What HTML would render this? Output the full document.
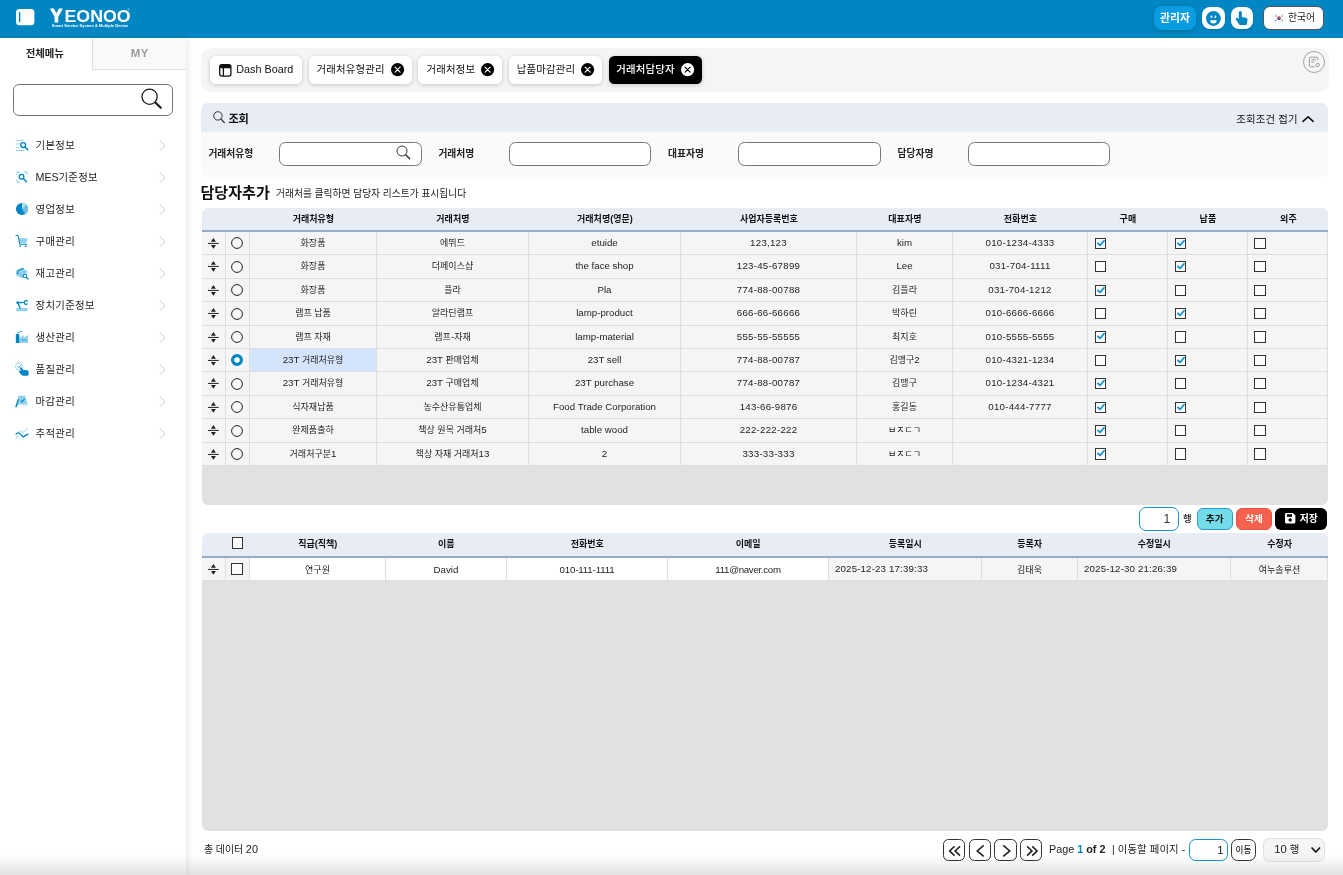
<!DOCTYPE html>
<html lang="ko">
<head>
<meta charset="utf-8">
<title>거래처담당자</title>
<style>
*{box-sizing:border-box;margin:0;padding:0}
html,body{width:1343px;height:875px;overflow:hidden;background:#fff}
body{filter:brightness(1);font-family:"Liberation Sans","Noto Sans CJK KR",sans-serif;font-size:10.4px;color:#222;position:relative}
.abs{position:absolute}
svg{display:block;overflow:visible}
#hdr{left:0;top:0;width:1343px;height:37.5px;background:#0087c3}
#side{left:0;top:37.5px;width:186.4px;height:838px;background:#fff;box-shadow:2px 0 7px rgba(0,0,0,.085)}
#side .t1{position:absolute;left:0;top:0;width:89.6px;height:32px;text-align:center;line-height:31px;font-weight:700;font-size:10.4px;color:#222}
#side .t2{position:absolute;left:92px;top:0;width:94.4px;height:32px;background:#f9f9f9;border-left:1px solid #dedede;border-bottom:1px solid #dedede;text-align:center;line-height:30px;font-weight:700;font-size:11.4px;letter-spacing:.5px;color:#9b9b9b}
#sbox{left:13px;top:46.8px;width:160px;height:31.4px;border:1px solid #777;border-radius:6px;background:#fff}
.mi{position:absolute;left:0;width:186px;height:32px}
.mi .tx{position:absolute;left:35.6px;top:0;line-height:34.4px;letter-spacing:.3px;font-size:10.4px;color:#222;white-space:nowrap}
.mi svg.ic{position:absolute;left:15.4px;top:8.5px;width:14px;height:14px}
.mi em{font-size:1.03em;letter-spacing:-.1px}
.mi svg.ch{position:absolute;left:159px;top:10.5px;width:7px;height:11px}
#tabbar{left:201.4px;top:48px;width:1127.4px;height:43.7px;background:#f5f5f5;border-radius:10px}
.tab{position:absolute;top:55.6px;height:28.6px;background:#fff;border-radius:5.5px;box-shadow:0 1px 4px rgba(0,0,0,.2);font-size:10.4px;line-height:28.4px;white-space:nowrap;color:#111}
.tab.on{background:#000;color:#fff;font-weight:500}
.tab .tt{position:absolute;top:0}
.tab svg{position:absolute}
#sp{left:201.4px;top:102.6px;width:1126.8px;height:74.6px;border-radius:7px;background:#fafafa;overflow:hidden}
#sp .h{position:absolute;left:0;top:0;width:100%;height:29px;background:#e7ecf5}
.lbl{position:absolute;font-size:9.75px;font-weight:700;color:#222;line-height:14px;white-space:nowrap}
.inp{position:absolute;top:142px;width:142px;height:24px;border:1px solid #777;border-radius:6.5px;background:#fff}
.grid{position:absolute;left:202px;width:1126px;background:#e1e1e1;border-radius:7px 7px 6px 6px;overflow:hidden;font-size:9px;color:#1d1d1d}
.gh{position:absolute;left:0;top:0;width:100%;background:#e7ecf5;border-bottom:2px solid #97acca;font-weight:700;color:#111}
.gh span,.gr span{position:absolute;top:0;text-align:center;white-space:nowrap;overflow:hidden;display:block}
.gr{position:absolute;left:0;width:100%;background:#f5f5f5;border-bottom:1px solid #dedede;border-right:1px solid #dedede}
.gr span{border-left:1px solid #dedede;height:100%}
.gr span:first-child{border-left:0}
.gr span.w{background:#fff}
.gr span.sel{background:#d5e4fd}
.gr span.l{text-align:left;padding-left:6px;letter-spacing:.16px;line-height:22.2px}
.gr span.e{letter-spacing:-.3px}
.gr span.e2{letter-spacing:-.15px}
.gr span.n{font-size:9.7px}
.gr span.d{letter-spacing:.25px}
em{font-style:normal;font-size:1.08em;line-height:0}
.gr i,.gh i{position:absolute;display:block;border:1px solid #333;background:#fbfbfb}
.gr svg,.gh svg{position:absolute}
.btn{position:absolute;border-radius:6px;font-weight:700;text-align:center;font-size:9.6px;white-space:nowrap}
.pb{position:absolute;top:839.1px;height:21.8px;border:1px solid #333;border-radius:5.5px;background:#fff}
.pb svg{position:absolute;left:-1px;top:-1px}

</style>
</head>
<body>
<div id="hdr" class="abs">
<svg class="abs" style="left:15.600px;top:9.400px" width="18.4" height="16.3" viewBox="0 0 18.4 16.3"><rect x="0" y="0" width="18.4" height="16.3" rx="3.6" fill="#fff"/><rect x="2.9" y="2.8" width="1.4" height="10.5" rx=".6" fill="#0087c3"/></svg>
<svg class="abs" style="left:48px;top:4px" width="90" height="28" viewBox="48 4 90 28" font-family="Liberation Sans, sans-serif" font-weight="700" fill="#fff"><text x="50.6" y="21.6" font-size="18.6" textLength="11.8" lengthAdjust="spacingAndGlyphs" stroke="#fff" stroke-width="1.1" stroke-linejoin="round">Y</text><text x="64.5" y="21.900" font-size="15.700" textLength="66.200" lengthAdjust="spacingAndGlyphs">EONOO</text><text x="127.4" y="10.6" font-size="2.6" font-weight="400">®</text><text x="51.8" y="27.1" font-size="3.3" textLength="76.3" lengthAdjust="spacingAndGlyphs">Smart Service System &amp; Multiple Device</text></svg>
<div class="abs" style="left:1154px;top:5.8px;width:42px;height:24.2px;border-radius:8px;background:#0a9ce1;box-shadow:0 1px 4px rgba(0,0,0,.18);color:#fff;font-weight:700;font-size:10.800px;line-height:24.600px;text-align:center">관리자</div>
<div class="abs" style="left:1201.8px;top:6.8px;width:23.2px;height:22.2px;border-radius:8px;background:#fff;box-shadow:0 1px 3px rgba(0,0,0,.15)"></div>
<svg class="abs" style="left:1205.700px;top:10.900px" width="14.800" height="15" viewBox="0 0 14.8 15"><circle cx="7.4" cy="7.5" r="7.4" fill="#0087c3"/><ellipse cx="5.400" cy="5.800" rx=".9" ry="1.250" fill="#fff"/><ellipse cx="9.400" cy="5.800" rx=".9" ry="1.250" fill="#fff"/><path d="M4.200 9.300h6.500a3.250 3.300 0 0 1-6.500 0z" fill="#fff"/></svg>
<div class="abs" style="left:1231px;top:6.8px;width:22px;height:22.2px;border-radius:8px;background:#fff;box-shadow:0 1px 3px rgba(0,0,0,.15)"></div>
<svg class="abs" style="left:1234.600px;top:11.200px" width="14" height="14.200" viewBox="0 0 14 15"><path d="M3.6 1.7a1.6 1.6 0 0 1 3.2 0v4.6l4.3.9c1.2.3 1.9 1.2 1.7 2.4l-.5 3.5c-.1 1-.9 1.7-1.9 1.7H5.6c-.7 0-1.3-.3-1.7-.9L.7 9.300c-.5-.7-.3-1.500.3-1.900.6-.4 1.400-.3 1.900.3l.7.9z" fill="#0087c3"/></svg>
<div class="abs" style="left:1263.2px;top:6.2px;width:60.4px;height:23.4px;border-radius:7px;background:#fff;border:1px solid #5a5350"></div>
<svg class="abs" style="left:1272.5px;top:13.9px" width="12" height="8.400" viewBox="0 0 11.4 8"><rect x=".2" y=".2" width="11" height="7.6" rx=".8" fill="#fff" stroke="#e3e3e3" stroke-width=".4"/><path d="M3.9 4a1.8 1.8 0 0 1 3.6 0z" fill="#d8304a"/><path d="M3.9 4a1.8 1.8 0 0 0 3.6 0z" fill="#1c4f9c"/><path d="M1.9 1.6l1.1 1M2.500 1.200l1.100 1M8.400 5.400l1.100 1M7.800 5.800l1.100 1M8.400 2.600l1.100-1M7.800 2.200l1.100-1M1.900 6.400l1.100-1M2.500 6.800l1.100-1" stroke="#222" stroke-width=".45"/></svg>
<div class="abs" style="left:1288.1px;top:6.5px;height:23px;line-height:22px;font-size:9.800px;color:#222;white-space:nowrap">한국어</div>
</div>
<div id="side" class="abs">
<div class="t1">전체메뉴</div><div class="t2">MY</div>
<div id="sbox" class="abs"><svg class="abs" style="left:126px;top:1.600px" width="26" height="26" viewBox="0 0 26 26" fill="none" stroke="#1a1a1a"><circle cx="9.6" cy="9.7" r="7.6" stroke-width="1.25"/><path d="M15.400 15.500l5.300 5.300" stroke-width="2.200" stroke-linecap="round"/></svg></div>
<div class="mi" style="top:91.5px"><svg class="ic" viewBox="0 0 15 15"><path d="M1 2.500h9M1 6.500h3.500M1 10.500h3.500M1 13.500h9" stroke="#8fd0ec" stroke-width="1.1" fill="none"/><circle cx="8.700" cy="7.600" r="2.600" stroke="#0087c3" stroke-width="1.5" fill="none"/><path d="M10.700 9.700l2.800 2.800" stroke="#0087c3" stroke-width="1.7" stroke-linecap="round"/></svg><span class="tx">기본정보</span><svg class="ch" viewBox="0 0 7 11" fill="none" stroke="#cfcfcf" stroke-width="1"><path d="M.7.500l5.500 5-5.500 5"/></svg></div>
<div class="mi" style="top:123.5px"><svg class="ic" viewBox="0 0 15 15"><path d="M2 5V3.200a1.200 1.200 0 0 1 1.200-1.200H5M10 2h1.800A1.200 1.200 0 0 1 13 3.200V5M2 10v1.800A1.200 1.200 0 0 0 3.200 13H5" stroke="#8fd0ec" stroke-width="1.100" fill="none"/><circle cx="7" cy="7.200" r="2.500" stroke="#0087c3" stroke-width="1.400" fill="none"/><path d="M9 9.200l3.300 3.300" stroke="#0087c3" stroke-width="1.600" stroke-linecap="round"/></svg><span class="tx"><em>MES</em>기준정보</span><svg class="ch" viewBox="0 0 7 11" fill="none" stroke="#cfcfcf" stroke-width="1"><path d="M.7.500l5.500 5-5.500 5"/></svg></div>
<div class="mi" style="top:155.5px"><svg class="ic" viewBox="0 0 15 15"><circle cx="7.500" cy="7.500" r="6.500" fill="#0087c3"/><path d="M7.500 7.500V1a6.500 6.500 0 0 1 3.250 12.130z" fill="#6fbde2"/><path d="M7.500 7.500V1a6.500 6.500 0 0 1 4.600 1.900z" fill="#b3def2"/></svg><span class="tx">영업정보</span><svg class="ch" viewBox="0 0 7 11" fill="none" stroke="#cfcfcf" stroke-width="1"><path d="M.7.500l5.500 5-5.500 5"/></svg></div>
<div class="mi" style="top:187.5px"><svg class="ic" viewBox="0 0 15 15"><path d="M4 4.500h9.500l-1.300 5.200H4.700z" fill="#8fd0ec"/><path d="M1 1.500h1.600c.4 0 .7.300.8.600L5 10.500c.1.400.4.600.8.600h6.700" stroke="#0087c3" stroke-width="1.100" fill="none" stroke-linecap="round"/><circle cx="5.500" cy="13" r=".9" fill="#0087c3"/><circle cx="11.500" cy="13" r=".9" fill="#0087c3"/></svg><span class="tx">구매관리</span><svg class="ch" viewBox="0 0 7 11" fill="none" stroke="#cfcfcf" stroke-width="1"><path d="M.7.500l5.500 5-5.500 5"/></svg></div>
<div class="mi" style="top:219.5px"><svg class="ic" viewBox="0 0 15 15"><path d="M1 5l6-3.500 6 3.500v2.500L9.500 9 8 13.500 1 10z" fill="#8fd0ec"/><path d="M1 5l6-3.500 2 1.200-6 3.600z" fill="#bfe4f5"/><path d="M3 8V5.200L8.800 2.600" stroke="#0087c3" stroke-width="1.200" fill="none" stroke-linecap="round" stroke-linejoin="round"/><circle cx="10.700" cy="10.700" r="1.900" stroke="#0087c3" stroke-width="1.200" fill="#fff"/><path d="M12.200 12.200l1.800 1.800" stroke="#0087c3" stroke-width="1.400" stroke-linecap="round"/></svg><span class="tx">재고관리</span><svg class="ch" viewBox="0 0 7 11" fill="none" stroke="#cfcfcf" stroke-width="1"><path d="M.7.500l5.500 5-5.500 5"/></svg></div>
<div class="mi" style="top:251.5px"><svg class="ic" viewBox="0 0 15 15"><rect x="1.400" y="10.600" width="12.100" height="3.700" rx="1" fill="#8fd0ec"/><path d="M2.800 5.100L8.800 4.700M3.200 5.400l2.200 5.400" stroke="#0087c3" stroke-width="1.500" fill="none" stroke-linecap="round"/><circle cx="2.900" cy="5" r="1.500" fill="#0087c3"/><path d="M13.200 3.300a2 2 0 1 0 0 3" stroke="#0087c3" stroke-width="1.300" fill="none" stroke-linecap="round"/></svg><span class="tx">장치기준정보</span><svg class="ch" viewBox="0 0 7 11" fill="none" stroke="#cfcfcf" stroke-width="1"><path d="M.7.500l5.500 5-5.500 5"/></svg></div>
<div class="mi" style="top:283.5px"><svg class="ic" viewBox="0 0 15 15"><path d="M4.700 13.800V8.600l4.600-3.200v3.200l4.700-3.200v8.400z" fill="#8fd0ec"/><path d="M.9 13.800V5.800c0-.8.600-1.400 1.400-1.400h1c.8 0 1.400.6 1.400 1.400v8z" fill="#0087c3"/><path d="M2.500 3.400c.2-1.200 1.600-.8 2.400-1.200.7-.4 1.200-.900 2-1" stroke="#0087c3" stroke-width="1" fill="none" stroke-linecap="round"/><rect x="7.600" y="10.200" width="1.400" height="1.300" fill="#0087c3"/><rect x="10.600" y="10.200" width="1.400" height="1.300" fill="#0087c3"/></svg><span class="tx">생산관리</span><svg class="ch" viewBox="0 0 7 11" fill="none" stroke="#cfcfcf" stroke-width="1"><path d="M.7.500l5.500 5-5.500 5"/></svg></div>
<div class="mi" style="top:315.5px"><svg class="ic" viewBox="0 0 15 15"><circle cx="4.300" cy="4.800" r="3.800" stroke="#8fd0ec" stroke-width="1" fill="none"/><path d="M2.800 4.800l1.200 1.200 2-2.300" stroke="#0087c3" stroke-width="1" fill="none"/><path d="M5.500 7.200c-.3-.6 0-1.200.5-1.400.5-.2 1.100 0 1.400.6l1 2 4.600.4c.9.100 1.600.8 1.600 1.700v2.600c0 .9-.7 1.600-1.600 1.600H8.600c-.6 0-1.100-.3-1.500-.7L4.600 11.200c-.4-.5-.4-1.200.1-1.600.5-.4 1.100-.3 1.500.1l.6.600z" fill="#0087c3"/></svg><span class="tx">품질관리</span><svg class="ch" viewBox="0 0 7 11" fill="none" stroke="#cfcfcf" stroke-width="1"><path d="M.7.500l5.500 5-5.500 5"/></svg></div>
<div class="mi" style="top:347.5px"><svg class="ic" viewBox="0 0 15 15"><path d="M3.600 1.800h7.300l2.600 9.500H2.400z" fill="#8fd0ec"/><path d="M11.700 11.300h1.800l.6 2.200h-1.800zM8.700 11.300h1.500l.4 2.200H9z" fill="#c2e4f5"/><path d="M3.300 4.600l.9 1.200-2.200 8.400H.100z" fill="#0087c3"/><path d="M6.200 7l1.300 1.300 2.700-2.700" stroke="#0087c3" stroke-width="1.200" fill="none"/></svg><span class="tx">마감관리</span><svg class="ch" viewBox="0 0 7 11" fill="none" stroke="#cfcfcf" stroke-width="1"><path d="M.7.500l5.500 5-5.500 5"/></svg></div>
<div class="mi" style="top:379.5px"><svg class="ic" viewBox="0 0 15 15"><path d="M1.100 13.800l2.300-3.600M4.600 6.300l1.200-1 2.600 1.700 5-4.300" stroke="#8fd0ec" stroke-width="1" fill="none" stroke-linecap="round" stroke-linejoin="round"/><path d="M1.100 8.500c1.200-1 2.400-1.400 3.600-.9l4.100 4.100 5.100-3" stroke="#0087c3" stroke-width="1.400" fill="none" stroke-linecap="round" stroke-linejoin="round"/></svg><span class="tx">추적관리</span><svg class="ch" viewBox="0 0 7 11" fill="none" stroke="#cfcfcf" stroke-width="1"><path d="M.7.500l5.500 5-5.500 5"/></svg></div>
</div>
<div id="tabbar" class="abs"></div>
<div class="tab" style="left:209.9px;width:92.6px"><svg style="left:9.200px;top:8.300px" width="12.600" height="12.800" viewBox="0 0 12.600 12.800"><rect x=".7" y=".7" width="11.200" height="11.400" rx="2" fill="#fff" stroke="#111" stroke-width="1.300"/><path d="M.7 4.300V2.700a2 2 0 0 1 2-2h7.200a2 2 0 0 1 2 2v1.600z" fill="#111"/><path d="M4.400 4v8" stroke="#111" stroke-width="1.300"/></svg><span class="tt" style="left:26.400px;font-size:10.800px;line-height:26.600px">Dash Board</span></div>
<div class="tab" style="left:308.8px;width:103.6px"><span class="tt" style="left:7.7px;letter-spacing:.2px">거래처유형관리</span><svg style="left:82.3px;top:7.500px" width="13.200" height="13.200" viewBox="0 0 13.200 13.200"><circle cx="6.600" cy="6.600" r="6.600" fill="#000"/><path d="M4.100 4.100l5 5M9.100 4.100l-5 5" stroke="#fff" stroke-width="1.150" stroke-linecap="round"/></svg></div>
<div class="tab" style="left:417.9px;width:84.5px"><span class="tt" style="left:8.6px;letter-spacing:.2px">거래처정보</span><svg style="left:63.1px;top:7.500px" width="13.200" height="13.200" viewBox="0 0 13.200 13.200"><circle cx="6.600" cy="6.600" r="6.600" fill="#000"/><path d="M4.100 4.100l5 5M9.100 4.100l-5 5" stroke="#fff" stroke-width="1.150" stroke-linecap="round"/></svg></div>
<div class="tab" style="left:509px;width:93.0px"><span class="tt" style="left:7.8px;letter-spacing:.2px">납품마감관리</span><svg style="left:72.0px;top:7.500px" width="13.200" height="13.200" viewBox="0 0 13.200 13.200"><circle cx="6.600" cy="6.600" r="6.600" fill="#000"/><path d="M4.100 4.100l5 5M9.100 4.100l-5 5" stroke="#fff" stroke-width="1.150" stroke-linecap="round"/></svg></div>
<div class="tab on" style="left:608.9px;width:93.1px"><span class="tt" style="left:7.3px;letter-spacing:.2px">거래처담당자</span><svg style="left:72.5px;top:7.500px" width="13.200" height="13.200" viewBox="0 0 13.200 13.200"><circle cx="6.600" cy="6.600" r="6.600" fill="#fff"/><path d="M4.100 4.100l5 5M9.100 4.100l-5 5" stroke="#000" stroke-width="1.150" stroke-linecap="round"/></svg></div>
<svg class="abs" style="left:1303px;top:51.200px" width="22" height="22" viewBox="0 0 22 22" fill="none" stroke="#9a9a9a"><circle cx="11" cy="11" r="10.500" stroke-width=".9" fill="#f7f7f7"/><path d="M14.800 9.500V7.200a1 1 0 0 0-1-1H7.400a1 1 0 0 0-1 1v7.600a1 1 0 0 0 1 1h4.400" stroke-width="1"/><path d="M8.300 8.800h4.600M8.300 11h2.600" stroke-width="1"/><circle cx="14.700" cy="14" r="1.700" stroke-width="1"/></svg>
<div id="sp" class="abs"><div class="h"></div></div>
<svg class="abs" style="left:213.300px;top:111.200px" width="12" height="12.500" viewBox="0 0 12 12.500" fill="none" stroke="#222"><circle cx="4.900" cy="4.900" r="4.200" stroke-width=".9"/><path d="M8 8.200l3.300 3.500" stroke-width="1.200" stroke-linecap="round"/></svg>
<div class="abs" style="left:228.600px;top:111.400px;font-size:11.200px;font-weight:700;line-height:16px;color:#111;white-space:nowrap;letter-spacing:-.4px">조회</div>
<div class="abs" style="left:1236.200px;top:111.500px;font-size:10.400px;line-height:16px;letter-spacing:.17px;color:#111;white-space:nowrap">조회조건 접기</div>
<svg class="abs" style="left:1302.400px;top:115.600px" width="12.600" height="6.400" viewBox="0 0 12.600 6.400" fill="none" stroke="#111" stroke-width="1.600" stroke-linecap="round" stroke-linejoin="round"><path d="M1 5.300l5.100-4.500 5.100 4.500"/></svg>
<div class="lbl" style="left:208.4px;top:146.700px">거래처유형</div>
<div class="inp" style="left:279.3px;width:142.8px"><svg class="abs" style="left:116px;top:2.400px" width="15" height="15" viewBox="0 0 15 15" fill="none" stroke="#222"><circle cx="6" cy="6" r="5" stroke-width=".9"/><path d="M9.700 9.800l4 4" stroke-width="1.300" stroke-linecap="round"/></svg></div>
<div class="lbl" style="left:438.4px;top:146.700px">거래처명</div>
<div class="inp" style="left:509px;width:141.6px"></div>
<div class="lbl" style="left:668.1px;top:146.700px">대표자명</div>
<div class="inp" style="left:738.2px;width:142.6px"></div>
<div class="lbl" style="left:897.6px;top:146.700px">담당자명</div>
<div class="inp" style="left:968.4px;width:141.6px"></div>
<div class="abs" style="left:200.400px;top:183.400px;font-size:15.100px;font-weight:700;line-height:20px;color:#111;white-space:nowrap">담당자추가</div>
<div class="abs" style="left:276px;top:187px;font-size:9.750px;line-height:14px;color:#222;white-space:nowrap">거래처를 클릭하면 담당자 리스트가 표시됩니다</div>
<div class="abs" style="left:1138.800px;top:507.200px;width:40.200px;height:23.600px;border:1px solid #1891d1;border-radius:7px;background:#fff;font-size:12.200px;line-height:22.400px;text-align:right;padding-right:7.600px;color:#333">1</div>
<div class="abs" style="left:1183px;top:512.300px;font-size:9.400px;line-height:13px;font-weight:500;color:#222">행</div>
<div class="btn" style="left:1196.800px;top:508.300px;width:35.800px;height:21.600px;background:#74dbe8;border:1px solid #2b9bd8;color:#111;line-height:19.600px">추가</div>
<div class="btn" style="left:1236.400px;top:508.300px;width:35.200px;height:21.600px;background:#f4624f;border:1px solid #e95544;color:#fff;line-height:19.600px">삭제</div>
<div class="btn" style="left:1275px;top:508.300px;width:52.400px;height:21.600px;background:#000;color:#fff;line-height:22.800px;text-align:left;padding-left:24.800px;font-size:9.800px">저장</div>
<svg class="abs" style="left:1285.200px;top:513px" width="10.400" height="10.400" viewBox="0 0 10.400 10.400"><path d="M1.400 0h6.500l2.500 2.500v6.500a1.400 1.400 0 0 1-1.400 1.400H1.400A1.400 1.400 0 0 1 0 9V1.400A1.400 1.400 0 0 1 1.400 0z" fill="#fff"/><rect x="2" y="1.300" width="5" height="2.500" fill="#000"/><circle cx="5.200" cy="7" r="1.700" fill="#000"/></svg>
<div class="abs" style="left:204px;top:843px;font-size:9.900px;line-height:14px;color:#222;white-space:nowrap">총 데이터 <em style="font-size:1.1em">20</em></div>
<div class="pb" style="left:942.9px;width:22px"><svg width="22" height="21.800" viewBox="0 0 22 21.800" fill="none" stroke="#222" stroke-width="1.550"><path d="M11.5 7.4L6.6 11.9l4.9 4.7M17 7.4l-4.9 4.5 4.9 4.7"/></svg></div>
<div class="pb" style="left:969px;width:22px"><svg width="22" height="21.800" viewBox="0 0 22 21.800" fill="none" stroke="#222" stroke-width="1.550"><path d="M14.7 6.4L8.2 11.9l6.5 5.5"/></svg></div>
<div class="pb" style="left:994.1px;width:23px"><svg width="23" height="21.800" viewBox="0 0 23 21.800" fill="none" stroke="#222" stroke-width="1.550"><path d="M9.2 6.4l6.6 5.5-6.600 5.500"/></svg></div>
<div class="pb" style="left:1020.1px;width:22px"><svg width="22" height="21.800" viewBox="0 0 22 21.800" fill="none" stroke="#222" stroke-width="1.550"><path d="M7.1 7.4l4.9 4.500-4.900 4.700M12.200 7.400l4.900 4.500-4.900 4.700"/></svg></div>
<div class="abs" style="left:1049px;top:842px;font-size:10.800px;line-height:15px;color:#222;white-space:nowrap">Page <b style="color:#0087c3">1</b><b> of 2</b></div>
<div class="abs" style="left:1112px;top:842px;font-size:10.400px;letter-spacing:.1px;line-height:15px;color:#222;white-space:nowrap">| 이동할 페이지 -</div>
<div class="abs" style="left:1189.200px;top:839.400px;width:38.600px;height:21.600px;border:1px solid #1891d1;border-radius:6.500px;background:#fff;font-size:11.400px;line-height:20.400px;text-align:right;padding-right:3.200px;color:#222">1</div>
<div class="abs" style="left:1230.800px;top:839.400px;width:25.200px;height:21.600px;border:1px solid #333;border-radius:6.500px;background:#fff;font-size:8.600px;font-weight:500;line-height:20.400px;text-align:center;color:#222">이동</div>
<div class="abs" style="left:1262.700px;top:838.200px;width:62px;height:23.400px;border:1px solid #e0e0e0;border-radius:6.500px;background:#f5f5f5;font-size:10.400px;line-height:21.800px;padding-left:10.600px;color:#222"><em>10</em> 행</div>
<svg class="abs" style="left:1310.800px;top:847px" width="9.600" height="6.400" viewBox="0 0 9.600 6.400" fill="none" stroke="#111" stroke-width="1.700" stroke-linecap="round" stroke-linejoin="round"><path d="M1 1l3.800 4 3.800-4"/></svg>
<div class="abs" style="left:0;top:855px;width:1343px;height:20px;background:linear-gradient(to bottom,rgba(0,0,0,0),rgba(0,0,0,.11))"></div>
<div class="grid" style="top:208.4px;height:296.2px">
<div class="gh" style="height:23.6px;line-height:23.400000000000002px"><span style="left:47.9px;width:127.0px">거래처유형</span><span style="left:174.9px;width:152.0px">거래처명</span><span style="left:326.9px;width:152.0px">거래처명(영문)</span><span style="left:478.9px;width:176.0px">사업자등록번호</span><span style="left:654.9px;width:96.0px">대표자명</span><span style="left:750.9px;width:135.0px">전화번호</span><span style="left:885.9px;width:80.0px">구매</span><span style="left:965.9px;width:80.0px">납품</span><span style="left:1045.9px;width:81.0px">외주</span></div>
<div class="gr" style="top:23.60px;height:23.4px;line-height:22.00px"><span style="left:0;width:23.0px"><svg style="left:6px;top:6.00px" width="10.800" height="10.800" viewBox="0 0 10.800 10.800" fill="#222"><path d="M5.400 0l2.500 3.700H2.900z"/><rect x="0" y="4.900" width="10.800" height="1"/><path d="M5.400 10.800l2.500-3.700H2.900z"/></svg></span><span style="left:23.0px;width:24.0px"><svg style="left:4.9px;top:5.40px" width="12" height="12" viewBox="0 0 12 12"><circle cx="6" cy="6" r="5.400" fill="#f8f8f8" stroke="#222" stroke-width="1"/></svg></span><span style="left:47.0px;width:127.0px">화장품</span><span style="left:174.0px;width:152.0px">에뛰드</span><span class="n" style="left:326.0px;width:152.0px">etuide</span><span class="n d" style="left:478.0px;width:176.0px">123,123</span><span class="n" style="left:654.0px;width:96.0px">kim</span><span class="n d" style="left:750.0px;width:135.0px">010-1234-4333</span><span style="left:885.0px;width:80.0px"><i style="left:6.9px;top:5.80px;width:11.2px;height:11.2px"></i><svg style="left:6.9px;top:5.80px" width="11.2" height="11.2" viewBox="0 0 11.200 11.200" fill="none" stroke="#0a8fd0" stroke-width="1.700"><path d="M2.400 5l2.700 2.300 4.400-5"/></svg></span><span style="left:965.0px;width:80.0px"><i style="left:6.9px;top:5.80px;width:11.2px;height:11.2px"></i><svg style="left:6.9px;top:5.80px" width="11.2" height="11.2" viewBox="0 0 11.200 11.200" fill="none" stroke="#0a8fd0" stroke-width="1.700"><path d="M2.400 5l2.700 2.300 4.400-5"/></svg></span><span style="left:1045.0px;width:81.0px"><i style="left:6.1px;top:5.80px;width:12px;height:11.2px"></i></span></div>
<div class="gr" style="top:47.00px;height:23.4px;line-height:22.00px"><span style="left:0;width:23.0px"><svg style="left:6px;top:6.00px" width="10.800" height="10.800" viewBox="0 0 10.800 10.800" fill="#222"><path d="M5.400 0l2.500 3.700H2.900z"/><rect x="0" y="4.900" width="10.800" height="1"/><path d="M5.400 10.800l2.500-3.700H2.900z"/></svg></span><span style="left:23.0px;width:24.0px"><svg style="left:4.9px;top:5.40px" width="12" height="12" viewBox="0 0 12 12"><circle cx="6" cy="6" r="5.400" fill="#f8f8f8" stroke="#222" stroke-width="1"/></svg></span><span style="left:47.0px;width:127.0px">화장품</span><span style="left:174.0px;width:152.0px">더페이스샵</span><span class="n" style="left:326.0px;width:152.0px">the face shop</span><span class="n d" style="left:478.0px;width:176.0px">123-45-67899</span><span class="n" style="left:654.0px;width:96.0px">Lee</span><span class="n d" style="left:750.0px;width:135.0px">031-704-1111</span><span style="left:885.0px;width:80.0px"><i style="left:6.9px;top:5.80px;width:11.2px;height:11.2px"></i></span><span style="left:965.0px;width:80.0px"><i style="left:6.9px;top:5.80px;width:11.2px;height:11.2px"></i><svg style="left:6.9px;top:5.80px" width="11.2" height="11.2" viewBox="0 0 11.200 11.200" fill="none" stroke="#0a8fd0" stroke-width="1.700"><path d="M2.400 5l2.700 2.300 4.400-5"/></svg></span><span style="left:1045.0px;width:81.0px"><i style="left:6.1px;top:5.80px;width:12px;height:11.2px"></i></span></div>
<div class="gr" style="top:70.40px;height:23.4px;line-height:22.00px"><span style="left:0;width:23.0px"><svg style="left:6px;top:6.00px" width="10.800" height="10.800" viewBox="0 0 10.800 10.800" fill="#222"><path d="M5.400 0l2.500 3.700H2.900z"/><rect x="0" y="4.900" width="10.800" height="1"/><path d="M5.400 10.800l2.500-3.700H2.900z"/></svg></span><span style="left:23.0px;width:24.0px"><svg style="left:4.9px;top:5.40px" width="12" height="12" viewBox="0 0 12 12"><circle cx="6" cy="6" r="5.400" fill="#f8f8f8" stroke="#222" stroke-width="1"/></svg></span><span style="left:47.0px;width:127.0px">화장품</span><span style="left:174.0px;width:152.0px">플라</span><span class="n" style="left:326.0px;width:152.0px">Pla</span><span class="n d" style="left:478.0px;width:176.0px">774-88-00788</span><span style="left:654.0px;width:96.0px">김플라</span><span class="n d" style="left:750.0px;width:135.0px">031-704-1212</span><span style="left:885.0px;width:80.0px"><i style="left:6.9px;top:5.80px;width:11.2px;height:11.2px"></i><svg style="left:6.9px;top:5.80px" width="11.2" height="11.2" viewBox="0 0 11.200 11.200" fill="none" stroke="#0a8fd0" stroke-width="1.700"><path d="M2.400 5l2.700 2.300 4.400-5"/></svg></span><span style="left:965.0px;width:80.0px"><i style="left:6.9px;top:5.80px;width:11.2px;height:11.2px"></i></span><span style="left:1045.0px;width:81.0px"><i style="left:6.1px;top:5.80px;width:12px;height:11.2px"></i></span></div>
<div class="gr" style="top:93.80px;height:23.4px;line-height:22.00px"><span style="left:0;width:23.0px"><svg style="left:6px;top:6.00px" width="10.800" height="10.800" viewBox="0 0 10.800 10.800" fill="#222"><path d="M5.400 0l2.500 3.700H2.900z"/><rect x="0" y="4.900" width="10.800" height="1"/><path d="M5.400 10.800l2.500-3.700H2.900z"/></svg></span><span style="left:23.0px;width:24.0px"><svg style="left:4.9px;top:5.40px" width="12" height="12" viewBox="0 0 12 12"><circle cx="6" cy="6" r="5.400" fill="#f8f8f8" stroke="#222" stroke-width="1"/></svg></span><span style="left:47.0px;width:127.0px">램프 납품</span><span style="left:174.0px;width:152.0px">알라딘램프</span><span class="n" style="left:326.0px;width:152.0px">lamp-product</span><span class="n d" style="left:478.0px;width:176.0px">666-66-66666</span><span style="left:654.0px;width:96.0px">박하린</span><span class="n d" style="left:750.0px;width:135.0px">010-6666-6666</span><span style="left:885.0px;width:80.0px"><i style="left:6.9px;top:5.80px;width:11.2px;height:11.2px"></i></span><span style="left:965.0px;width:80.0px"><i style="left:6.9px;top:5.80px;width:11.2px;height:11.2px"></i><svg style="left:6.9px;top:5.80px" width="11.2" height="11.2" viewBox="0 0 11.200 11.200" fill="none" stroke="#0a8fd0" stroke-width="1.700"><path d="M2.400 5l2.700 2.300 4.400-5"/></svg></span><span style="left:1045.0px;width:81.0px"><i style="left:6.1px;top:5.80px;width:12px;height:11.2px"></i></span></div>
<div class="gr" style="top:117.20px;height:23.4px;line-height:22.00px"><span style="left:0;width:23.0px"><svg style="left:6px;top:6.00px" width="10.800" height="10.800" viewBox="0 0 10.800 10.800" fill="#222"><path d="M5.400 0l2.500 3.700H2.900z"/><rect x="0" y="4.900" width="10.800" height="1"/><path d="M5.400 10.800l2.500-3.700H2.900z"/></svg></span><span style="left:23.0px;width:24.0px"><svg style="left:4.9px;top:5.40px" width="12" height="12" viewBox="0 0 12 12"><circle cx="6" cy="6" r="5.400" fill="#f8f8f8" stroke="#222" stroke-width="1"/></svg></span><span style="left:47.0px;width:127.0px">램프 자재</span><span style="left:174.0px;width:152.0px">램프<em>-</em>자재</span><span class="n" style="left:326.0px;width:152.0px">lamp-material</span><span class="n d" style="left:478.0px;width:176.0px">555-55-55555</span><span style="left:654.0px;width:96.0px">최지호</span><span class="n d" style="left:750.0px;width:135.0px">010-5555-5555</span><span style="left:885.0px;width:80.0px"><i style="left:6.9px;top:5.80px;width:11.2px;height:11.2px"></i><svg style="left:6.9px;top:5.80px" width="11.2" height="11.2" viewBox="0 0 11.200 11.200" fill="none" stroke="#0a8fd0" stroke-width="1.700"><path d="M2.400 5l2.700 2.300 4.400-5"/></svg></span><span style="left:965.0px;width:80.0px"><i style="left:6.9px;top:5.80px;width:11.2px;height:11.2px"></i></span><span style="left:1045.0px;width:81.0px"><i style="left:6.1px;top:5.80px;width:12px;height:11.2px"></i></span></div>
<div class="gr" style="top:140.60px;height:23.4px;line-height:22.00px"><span style="left:0;width:23.0px"><svg style="left:6px;top:6.00px" width="10.800" height="10.800" viewBox="0 0 10.800 10.800" fill="#222"><path d="M5.400 0l2.500 3.700H2.900z"/><rect x="0" y="4.900" width="10.800" height="1"/><path d="M5.400 10.800l2.500-3.700H2.900z"/></svg></span><span style="left:23.0px;width:24.0px"><svg style="left:4.9px;top:5.40px" width="12" height="12" viewBox="0 0 12 12"><circle cx="6" cy="6" r="4.400" fill="#fff" stroke="#0087c3" stroke-width="3.200"/></svg></span><span class="sel" style="left:47.0px;width:127.0px"><em>23T</em> 거래처유형</span><span style="left:174.0px;width:152.0px"><em>23T</em> 판매업체</span><span class="n" style="left:326.0px;width:152.0px">23T sell</span><span class="n d" style="left:478.0px;width:176.0px">774-88-00787</span><span style="left:654.0px;width:96.0px">김맹구<em>2</em></span><span class="n d" style="left:750.0px;width:135.0px">010-4321-1234</span><span style="left:885.0px;width:80.0px"><i style="left:6.9px;top:5.80px;width:11.2px;height:11.2px"></i></span><span style="left:965.0px;width:80.0px"><i style="left:6.9px;top:5.80px;width:11.2px;height:11.2px"></i><svg style="left:6.9px;top:5.80px" width="11.2" height="11.2" viewBox="0 0 11.200 11.200" fill="none" stroke="#0a8fd0" stroke-width="1.700"><path d="M2.400 5l2.700 2.300 4.400-5"/></svg></span><span style="left:1045.0px;width:81.0px"><i style="left:6.1px;top:5.80px;width:12px;height:11.2px"></i></span></div>
<div class="gr" style="top:164.00px;height:23.4px;line-height:22.00px"><span style="left:0;width:23.0px"><svg style="left:6px;top:6.00px" width="10.800" height="10.800" viewBox="0 0 10.800 10.800" fill="#222"><path d="M5.400 0l2.500 3.700H2.900z"/><rect x="0" y="4.900" width="10.800" height="1"/><path d="M5.400 10.800l2.500-3.700H2.900z"/></svg></span><span style="left:23.0px;width:24.0px"><svg style="left:4.9px;top:5.40px" width="12" height="12" viewBox="0 0 12 12"><circle cx="6" cy="6" r="5.400" fill="#f8f8f8" stroke="#222" stroke-width="1"/></svg></span><span style="left:47.0px;width:127.0px"><em>23T</em> 거래처유형</span><span style="left:174.0px;width:152.0px"><em>23T</em> 구매업체</span><span class="n" style="left:326.0px;width:152.0px">23T purchase</span><span class="n d" style="left:478.0px;width:176.0px">774-88-00787</span><span style="left:654.0px;width:96.0px">김맹구</span><span class="n d" style="left:750.0px;width:135.0px">010-1234-4321</span><span style="left:885.0px;width:80.0px"><i style="left:6.9px;top:5.80px;width:11.2px;height:11.2px"></i><svg style="left:6.9px;top:5.80px" width="11.2" height="11.2" viewBox="0 0 11.200 11.200" fill="none" stroke="#0a8fd0" stroke-width="1.700"><path d="M2.400 5l2.700 2.300 4.400-5"/></svg></span><span style="left:965.0px;width:80.0px"><i style="left:6.9px;top:5.80px;width:11.2px;height:11.2px"></i></span><span style="left:1045.0px;width:81.0px"><i style="left:6.1px;top:5.80px;width:12px;height:11.2px"></i></span></div>
<div class="gr" style="top:187.40px;height:23.4px;line-height:22.00px"><span style="left:0;width:23.0px"><svg style="left:6px;top:6.00px" width="10.800" height="10.800" viewBox="0 0 10.800 10.800" fill="#222"><path d="M5.400 0l2.500 3.700H2.900z"/><rect x="0" y="4.900" width="10.800" height="1"/><path d="M5.400 10.800l2.500-3.700H2.900z"/></svg></span><span style="left:23.0px;width:24.0px"><svg style="left:4.9px;top:5.40px" width="12" height="12" viewBox="0 0 12 12"><circle cx="6" cy="6" r="5.400" fill="#f8f8f8" stroke="#222" stroke-width="1"/></svg></span><span style="left:47.0px;width:127.0px">식자재납품</span><span style="left:174.0px;width:152.0px">농수산유통업체</span><span class="n" style="left:326.0px;width:152.0px">Food Trade Corporation</span><span class="n d" style="left:478.0px;width:176.0px">143-66-9876</span><span style="left:654.0px;width:96.0px">홍길동</span><span class="n d" style="left:750.0px;width:135.0px">010-444-7777</span><span style="left:885.0px;width:80.0px"><i style="left:6.9px;top:5.80px;width:11.2px;height:11.2px"></i><svg style="left:6.9px;top:5.80px" width="11.2" height="11.2" viewBox="0 0 11.200 11.200" fill="none" stroke="#0a8fd0" stroke-width="1.700"><path d="M2.400 5l2.700 2.300 4.400-5"/></svg></span><span style="left:965.0px;width:80.0px"><i style="left:6.9px;top:5.80px;width:11.2px;height:11.2px"></i><svg style="left:6.9px;top:5.80px" width="11.2" height="11.2" viewBox="0 0 11.200 11.200" fill="none" stroke="#0a8fd0" stroke-width="1.700"><path d="M2.400 5l2.700 2.300 4.400-5"/></svg></span><span style="left:1045.0px;width:81.0px"><i style="left:6.1px;top:5.80px;width:12px;height:11.2px"></i></span></div>
<div class="gr" style="top:210.80px;height:23.4px;line-height:22.00px"><span style="left:0;width:23.0px"><svg style="left:6px;top:6.00px" width="10.800" height="10.800" viewBox="0 0 10.800 10.800" fill="#222"><path d="M5.400 0l2.500 3.700H2.900z"/><rect x="0" y="4.900" width="10.800" height="1"/><path d="M5.400 10.800l2.500-3.700H2.900z"/></svg></span><span style="left:23.0px;width:24.0px"><svg style="left:4.9px;top:5.40px" width="12" height="12" viewBox="0 0 12 12"><circle cx="6" cy="6" r="5.400" fill="#f8f8f8" stroke="#222" stroke-width="1"/></svg></span><span style="left:47.0px;width:127.0px">완제품출하</span><span style="left:174.0px;width:152.0px">책상 원목 거래처<em>5</em></span><span class="n" style="left:326.0px;width:152.0px">table wood</span><span class="n d" style="left:478.0px;width:176.0px">222-222-222</span><span style="left:654.0px;width:96.0px">ㅂㅈㄷㄱ</span><span style="left:750.0px;width:135.0px"></span><span style="left:885.0px;width:80.0px"><i style="left:6.9px;top:5.80px;width:11.2px;height:11.2px"></i><svg style="left:6.9px;top:5.80px" width="11.2" height="11.2" viewBox="0 0 11.200 11.200" fill="none" stroke="#0a8fd0" stroke-width="1.700"><path d="M2.400 5l2.700 2.300 4.400-5"/></svg></span><span style="left:965.0px;width:80.0px"><i style="left:6.9px;top:5.80px;width:11.2px;height:11.2px"></i></span><span style="left:1045.0px;width:81.0px"><i style="left:6.1px;top:5.80px;width:12px;height:11.2px"></i></span></div>
<div class="gr" style="top:234.20px;height:23.4px;line-height:22.00px"><span style="left:0;width:23.0px"><svg style="left:6px;top:6.00px" width="10.800" height="10.800" viewBox="0 0 10.800 10.800" fill="#222"><path d="M5.400 0l2.500 3.700H2.900z"/><rect x="0" y="4.900" width="10.800" height="1"/><path d="M5.400 10.800l2.500-3.700H2.900z"/></svg></span><span style="left:23.0px;width:24.0px"><svg style="left:4.9px;top:5.40px" width="12" height="12" viewBox="0 0 12 12"><circle cx="6" cy="6" r="5.400" fill="#f8f8f8" stroke="#222" stroke-width="1"/></svg></span><span style="left:47.0px;width:127.0px">거래처구분<em>1</em></span><span style="left:174.0px;width:152.0px">책상 자재 거래처<em>13</em></span><span class="n" style="left:326.0px;width:152.0px">2</span><span class="n d" style="left:478.0px;width:176.0px">333-33-333</span><span style="left:654.0px;width:96.0px">ㅂㅈㄷㄱ</span><span style="left:750.0px;width:135.0px"></span><span style="left:885.0px;width:80.0px"><i style="left:6.9px;top:5.80px;width:11.2px;height:11.2px"></i><svg style="left:6.9px;top:5.80px" width="11.2" height="11.2" viewBox="0 0 11.200 11.200" fill="none" stroke="#0a8fd0" stroke-width="1.700"><path d="M2.400 5l2.700 2.300 4.400-5"/></svg></span><span style="left:965.0px;width:80.0px"><i style="left:6.9px;top:5.80px;width:11.2px;height:11.2px"></i></span><span style="left:1045.0px;width:81.0px"><i style="left:6.1px;top:5.80px;width:12px;height:11.2px"></i></span></div>
</div>
<div class="grid" style="top:533.2px;height:297.8px">
<div class="gh" style="height:24.6px;line-height:23.8px"><span style="left:23.0px;width:24.0px;height:100%"><i style="left:7.0px;top:4.00px;width:11.2px;height:12.2px"></i></span><span style="left:47.7px;width:136.0px">직급(직책)</span><span style="left:183.7px;width:121.0px">이름</span><span style="left:304.7px;width:161.0px">전화번호</span><span style="left:465.7px;width:161.0px">이메일</span><span style="left:626.7px;width:153.0px">등록일시</span><span style="left:779.7px;width:96.0px">등록자</span><span style="left:875.7px;width:153.0px">수정일시</span><span style="left:1028.7px;width:98.0px">수정자</span></div>
<div class="gr" style="top:24.60px;height:23.6px;line-height:24.40px"><span style="left:0;width:23.0px"><svg style="left:6px;top:6.10px" width="10.800" height="10.800" viewBox="0 0 10.800 10.800" fill="#222"><path d="M5.400 0l2.500 3.700H2.900z"/><rect x="0" y="4.900" width="10.800" height="1"/><path d="M5.400 10.800l2.500-3.700H2.900z"/></svg></span><span style="left:23.0px;width:24.0px"><i style="left:5.1px;top:5.50px;width:12px;height:12px"></i></span><span class="w" style="left:47.0px;width:136.0px">연구원</span><span class="w n" style="left:183.0px;width:121.0px">David</span><span class="w n e2" style="left:304.0px;width:161.0px">010-111-1111</span><span class="w n e" style="left:465.0px;width:161.0px">111@naver.com</span><span class="l n" style="left:626.0px;width:153.0px">2025-12-23 17:39:33</span><span style="left:779.0px;width:96.0px">김태욱</span><span class="l n" style="left:875.0px;width:153.0px">2025-12-30 21:26:39</span><span style="left:1028.0px;width:98.0px">여누솔루션</span></div>
</div>
</body>
</html>
